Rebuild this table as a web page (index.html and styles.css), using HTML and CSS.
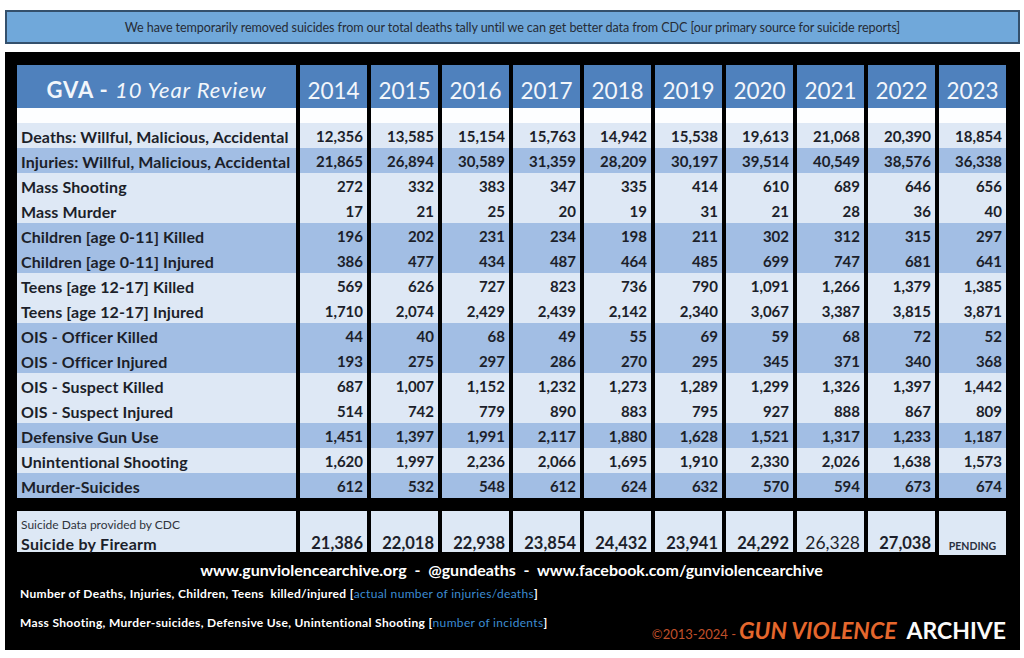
FILE: index.html
```html
<!DOCTYPE html>
<html lang="en">
<head>
<meta charset="utf-8">
<title>GVA - 10 Year Review</title>
<link rel="stylesheet" href="styles.css">
</head>
<body>
<div class="page">
  <div class="notice">We have temporarily removed suicides from our total deaths tally until we can get better data from CDC [our primary source for suicide reports]</div>
  <div class="panel">
    <div class="table">
      <div class="row head">
        <div class="cell label"><b>GVA - </b><i>10 Year Review</i></div>
        <div class="cell">2014</div><div class="cell">2015</div><div class="cell">2016</div><div class="cell">2017</div><div class="cell">2018</div><div class="cell">2019</div><div class="cell">2020</div><div class="cell">2021</div><div class="cell">2022</div><div class="cell">2023</div>
      </div>
      <div class="row blank">
        <div class="cell label"></div><div class="cell"></div><div class="cell"></div><div class="cell"></div><div class="cell"></div><div class="cell"></div><div class="cell"></div><div class="cell"></div><div class="cell"></div><div class="cell"></div><div class="cell"></div>
      </div>
      <div class="row light"><div class="cell label">Deaths: Willful, Malicious, Accidental</div><div class="cell">12,356</div><div class="cell">13,585</div><div class="cell">15,154</div><div class="cell">15,763</div><div class="cell">14,942</div><div class="cell">15,538</div><div class="cell">19,613</div><div class="cell">21,068</div><div class="cell">20,390</div><div class="cell">18,854</div></div>
      <div class="row mid"><div class="cell label">Injuries: Willful, Malicious, Accidental</div><div class="cell">21,865</div><div class="cell">26,894</div><div class="cell">30,589</div><div class="cell">31,359</div><div class="cell">28,209</div><div class="cell">30,197</div><div class="cell">39,514</div><div class="cell">40,549</div><div class="cell">38,576</div><div class="cell">36,338</div></div>
      <div class="row light"><div class="cell label">Mass Shooting</div><div class="cell">272</div><div class="cell">332</div><div class="cell">383</div><div class="cell">347</div><div class="cell">335</div><div class="cell">414</div><div class="cell">610</div><div class="cell">689</div><div class="cell">646</div><div class="cell">656</div></div>
      <div class="row light"><div class="cell label">Mass Murder</div><div class="cell">17</div><div class="cell">21</div><div class="cell">25</div><div class="cell">20</div><div class="cell">19</div><div class="cell">31</div><div class="cell">21</div><div class="cell">28</div><div class="cell">36</div><div class="cell">40</div></div>
      <div class="row mid"><div class="cell label">Children [age 0-11] Killed</div><div class="cell">196</div><div class="cell">202</div><div class="cell">231</div><div class="cell">234</div><div class="cell">198</div><div class="cell">211</div><div class="cell">302</div><div class="cell">312</div><div class="cell">315</div><div class="cell">297</div></div>
      <div class="row mid"><div class="cell label">Children [age 0-11] Injured</div><div class="cell">386</div><div class="cell">477</div><div class="cell">434</div><div class="cell">487</div><div class="cell">464</div><div class="cell">485</div><div class="cell">699</div><div class="cell">747</div><div class="cell">681</div><div class="cell">641</div></div>
      <div class="row light"><div class="cell label">Teens [age 12-17] Killed</div><div class="cell">569</div><div class="cell">626</div><div class="cell">727</div><div class="cell">823</div><div class="cell">736</div><div class="cell">790</div><div class="cell">1,091</div><div class="cell">1,266</div><div class="cell">1,379</div><div class="cell">1,385</div></div>
      <div class="row light"><div class="cell label">Teens [age 12-17] Injured</div><div class="cell">1,710</div><div class="cell">2,074</div><div class="cell">2,429</div><div class="cell">2,439</div><div class="cell">2,142</div><div class="cell">2,340</div><div class="cell">3,067</div><div class="cell">3,387</div><div class="cell">3,815</div><div class="cell">3,871</div></div>
      <div class="row mid"><div class="cell label">OIS - Officer Killed</div><div class="cell">44</div><div class="cell">40</div><div class="cell">68</div><div class="cell">49</div><div class="cell">55</div><div class="cell">69</div><div class="cell">59</div><div class="cell">68</div><div class="cell">72</div><div class="cell">52</div></div>
      <div class="row mid"><div class="cell label">OIS - Officer Injured</div><div class="cell">193</div><div class="cell">275</div><div class="cell">297</div><div class="cell">286</div><div class="cell">270</div><div class="cell">295</div><div class="cell">345</div><div class="cell">371</div><div class="cell">340</div><div class="cell">368</div></div>
      <div class="row light"><div class="cell label">OIS - Suspect Killed</div><div class="cell">687</div><div class="cell">1,007</div><div class="cell">1,152</div><div class="cell">1,232</div><div class="cell">1,273</div><div class="cell">1,289</div><div class="cell">1,299</div><div class="cell">1,326</div><div class="cell">1,397</div><div class="cell">1,442</div></div>
      <div class="row light"><div class="cell label">OIS - Suspect Injured</div><div class="cell">514</div><div class="cell">742</div><div class="cell">779</div><div class="cell">890</div><div class="cell">883</div><div class="cell">795</div><div class="cell">927</div><div class="cell">888</div><div class="cell">867</div><div class="cell">809</div></div>
      <div class="row mid"><div class="cell label">Defensive Gun Use</div><div class="cell">1,451</div><div class="cell">1,397</div><div class="cell">1,991</div><div class="cell">2,117</div><div class="cell">1,880</div><div class="cell">1,628</div><div class="cell">1,521</div><div class="cell">1,317</div><div class="cell">1,233</div><div class="cell">1,187</div></div>
      <div class="row light"><div class="cell label">Unintentional Shooting</div><div class="cell">1,620</div><div class="cell">1,997</div><div class="cell">2,236</div><div class="cell">2,066</div><div class="cell">1,695</div><div class="cell">1,910</div><div class="cell">2,330</div><div class="cell">2,026</div><div class="cell">1,638</div><div class="cell">1,573</div></div>
      <div class="row mid"><div class="cell label">Murder-Suicides</div><div class="cell">612</div><div class="cell">532</div><div class="cell">548</div><div class="cell">612</div><div class="cell">624</div><div class="cell">632</div><div class="cell">570</div><div class="cell">594</div><div class="cell">673</div><div class="cell">674</div></div>
    </div>
    <div class="row suicide">
      <div class="cell label"><span class="note">Suicide Data provided by CDC</span><span class="title">Suicide by Firearm</span></div>
      <div class="cell">21,386</div><div class="cell">22,018</div><div class="cell">22,938</div><div class="cell">23,854</div><div class="cell">24,432</div><div class="cell">23,941</div><div class="cell">24,292</div><div class="cell plain">26,328</div><div class="cell">27,038</div><div class="cell pending">PENDING</div>
    </div>
    <div class="footer">
      <div class="links">www.gunviolencearchive.org &nbsp;-&nbsp; @gundeaths &nbsp;-&nbsp; www.facebook.com/gunviolencearchive</div>
      <div class="legend-row">
        <div class="legend">
          <p>Number of Deaths, Injuries, Children, Teens&nbsp; killed/injured [<span class="blue">actual number of injuries/deaths</span>]</p>
          <p>Mass Shooting, Murder-suicides, Defensive Use, Unintentional Shooting [<span class="blue">number of incidents</span>]</p>
        </div>
        <div class="brand"><span class="copy">©2013-2024 - </span><span class="gv">GUN VIOLENCE</span><span class="archive">ARCHIVE</span></div>
      </div>
    </div>
  </div>
</div>
</body>
</html>
```
FILE: styles.css
```css
html, body {
  margin: 0;
  padding: 0;
  background: #ffffff;
}
body {
  font-family: Lato, "Noto Sans", sans-serif;
  color: #1c1f2a;
}
.page {
  width: 1015px;
  padding: 10px 4px 8px 5px;
  display: flex;
  flex-direction: column;
  gap: 8px;
}
.notice {
  height: 30px;
  background: #70a8da;
  border: 2px solid #34506c;
  display: flex;
  align-items: center;
  justify-content: center;
  font-size: 12.6px;
  color: #262c36;
  letter-spacing: -0.1px;
}
.panel {
  background: #000;
  height: 585px;
  padding: 13px 14px 0 12px;
  display: flex;
  flex-direction: column;
}
.table {
  display: flex;
  flex-direction: column;
}
.row {
  display: grid;
  grid-template-columns: 279px repeat(10, 67px);
  column-gap: 4px;
}
.cell {
  display: flex;
  align-items: center;
  justify-content: flex-end;
  padding: 0 4px;
  font-weight: 700;
  font-size: 15px;
}
.cell.label {
  justify-content: flex-start;
  padding: 0 4px;
  white-space: nowrap;
}
.head .cell {
  background: #4f81bd;
  height: 43px;
  justify-content: center;
  color: #f2f6fb;
  font-weight: 400;
  font-size: 22.5px;
  padding-top: 7px;
  box-sizing: border-box;
}
.head .cell.label {
  justify-content: center;
  font-size: 22px;
  letter-spacing: 0.9px;
  padding-top: 5px;
}
.head .cell.label b { font-weight: 700; white-space: pre; }
.head .cell.label i { font-style: italic; }
.blank .cell {
  background: #fdfeff;
  height: 15px;
}
.light .cell {
  background: #dee8f5;
  height: 25px;
}
.mid .cell {
  background: #a2bee4;
  height: 25px;
}
.light .cell.label,
.mid .cell.label {
  font-size: 16px;
  letter-spacing: 0.1px;
  padding-top: 1px;
  box-sizing: border-box;
}
.suicide {
  margin-top: 13px;
}
.suicide .cell {
  background: #dde8f5;
  height: 41px;
  align-items: flex-end;
  padding-bottom: 0;
  font-size: 16.5px;
  line-height: 18px;
}
.suicide .cell.label {
  flex-direction: column;
  align-items: flex-start;
  justify-content: flex-end;
  line-height: 17px;
}
.suicide .note {
  font-weight: 400;
  font-size: 12px;
  line-height: 15px;
  margin-bottom: 3px;
  color: #30343c;
}
.suicide .title {
  font-size: 16px;
  line-height: 17px;
  letter-spacing: 0.3px;
}
.suicide .cell.plain {
  font-weight: 400;
  font-size: 17.5px;
}
.suicide .cell.pending {
  font-size: 10.5px;
  line-height: 12px;
  color: #2a3040;
  padding-bottom: 3px;
  justify-content: center;
}
.footer {
  color: #fff;
  display: flex;
  flex-direction: column;
}
.links {
  text-align: center;
  font-weight: 700;
  font-size: 16px;
  margin-top: 5px;
  line-height: 20px;
}
.legend-row {
  display: flex;
  justify-content: space-between;
  align-items: flex-end;
}
.legend p {
  margin: 0;
  font-size: 12px;
  font-weight: 700;
  line-height: 14px;
  padding-left: 3px;
  letter-spacing: 0.33px;
}
.legend p:first-child {
  margin-top: 7px;
}
.legend p + p {
  margin-top: 15px;
}
.blue {
  color: #3d8cd2;
  font-weight: 400;
}
.brand {
  display: flex;
  align-items: baseline;
  margin-bottom: -14px;
}
.copy {
  color: #c0502a;
  font-size: 13px;
  margin-right: 3px;
}
.gv {
  color: #e5672d;
  font-size: 23px;
  font-weight: 700;
  font-style: italic;
  margin-right: 10px;
}
.archive {
  color: #fafafa;
  font-size: 23px;
  font-weight: 700;
}
```
